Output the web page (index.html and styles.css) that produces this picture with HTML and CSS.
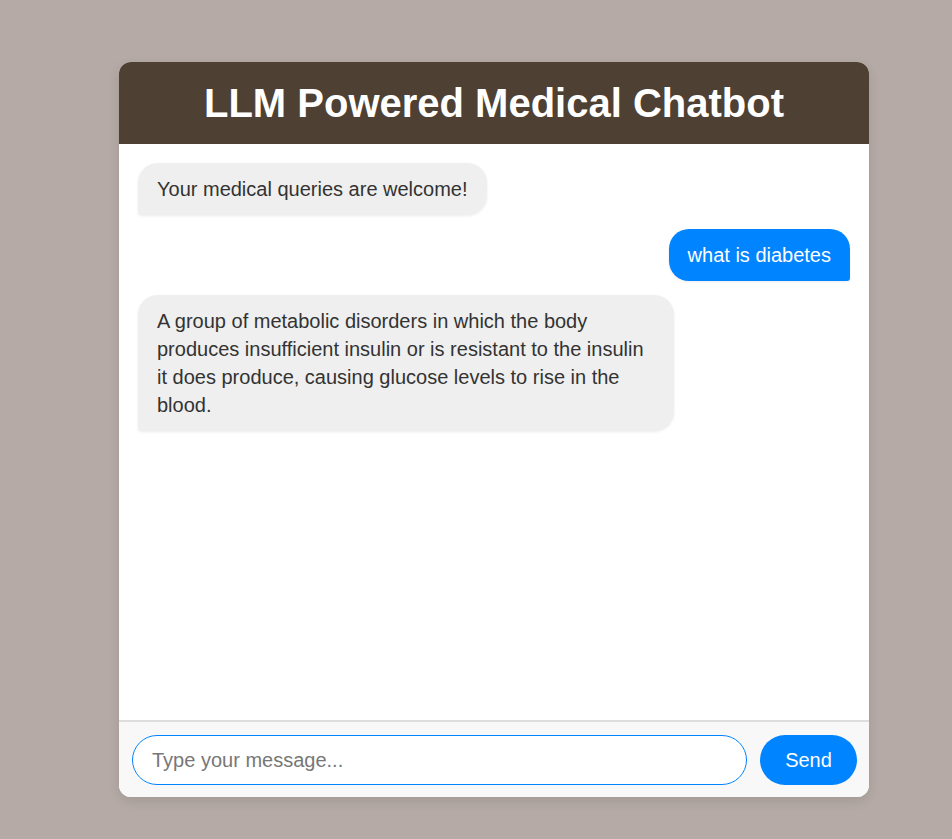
FILE: index.html
```html
<!DOCTYPE html>
<html lang="en">
<head>
<meta charset="utf-8">
<title>LLM Powered Medical Chatbot</title>
<link rel="stylesheet" href="styles.css">
</head>
<body>
<div class="chat-container">
  <div class="chat-header">
    <h1>LLM Powered Medical Chatbot</h1>
  </div>
  <div class="chat-box">
    <div class="message bot">Your medical queries are welcome!</div>
    <div class="message user">what is diabetes</div>
    <div class="message bot">A group of metabolic disorders in which the body produces insufficient insulin or is resistant to the insulin it does produce, causing glucose levels to rise in the blood.</div>
  </div>
  <div class="chat-input">
    <input type="text" placeholder="Type your message...">
    <button type="button">Send</button>
  </div>
</div>
</body>
</html>
```
FILE: styles.css
```css
* { box-sizing: border-box; }
html, body { margin: 0; padding: 0; }
body {
  background: #b5aaa5;
  font-family: "Liberation Sans", Arial, sans-serif;
  padding-top: 62px;
  padding-left: 119px;
  height: 839px;
}
.chat-container {
  width: 750px;
  height: 735px;
  background: #fff;
  border-radius: 12px;
  overflow: hidden;
  box-shadow: 0 4px 12px rgba(0,0,0,0.1);
  display: flex;
  flex-direction: column;
}
.chat-header {
  background: #4e4033;
  height: 82px;
  display: flex;
  align-items: center;
  justify-content: center;
}
.chat-header h1 {
  margin: 0;
  color: #fff;
  font-size: 40px;
  font-weight: bold;
}
.chat-box {
  flex: 1;
  padding: 19px 19px;
  display: flex;
  flex-direction: column;
  gap: 14px;
  border-bottom: 2px solid #ddd;
}
.message {
  max-width: 536px;
  padding: 12px 19px;
  font-size: 20px;
  line-height: 28px;
  border-radius: 20px;
  box-shadow: 0 1px 3px rgba(0,0,0,0.08);
}
.message.bot {
  align-self: flex-start;
  background: #efefef;
  color: #333;
  border-bottom-left-radius: 3px;
}
.message.user {
  align-self: flex-end;
  background: #0084ff;
  color: #fff;
  border-bottom-right-radius: 3px;
}
.chat-input {
  height: 75px;
  background: #f8f8f8;
  display: flex;
  align-items: flex-start;
  padding: 13px 12px 0 13px;
  gap: 13px;
}
.chat-input input {
  flex: 1;
  height: 50px;
  border: 1px solid #0084ff;
  border-radius: 25px;
  padding: 0 19px;
  font-size: 20px;
  font-family: "Liberation Sans", Arial, sans-serif;
  color: #333;
  outline: none;
  background: #fff;
}
.chat-input input::placeholder { color: #777; }
.chat-input button {
  width: 97px;
  height: 50px;
  border: none;
  border-radius: 25px;
  background: #0084ff;
  color: #fff;
  font-size: 20px;
  font-family: "Liberation Sans", Arial, sans-serif;
}
```
